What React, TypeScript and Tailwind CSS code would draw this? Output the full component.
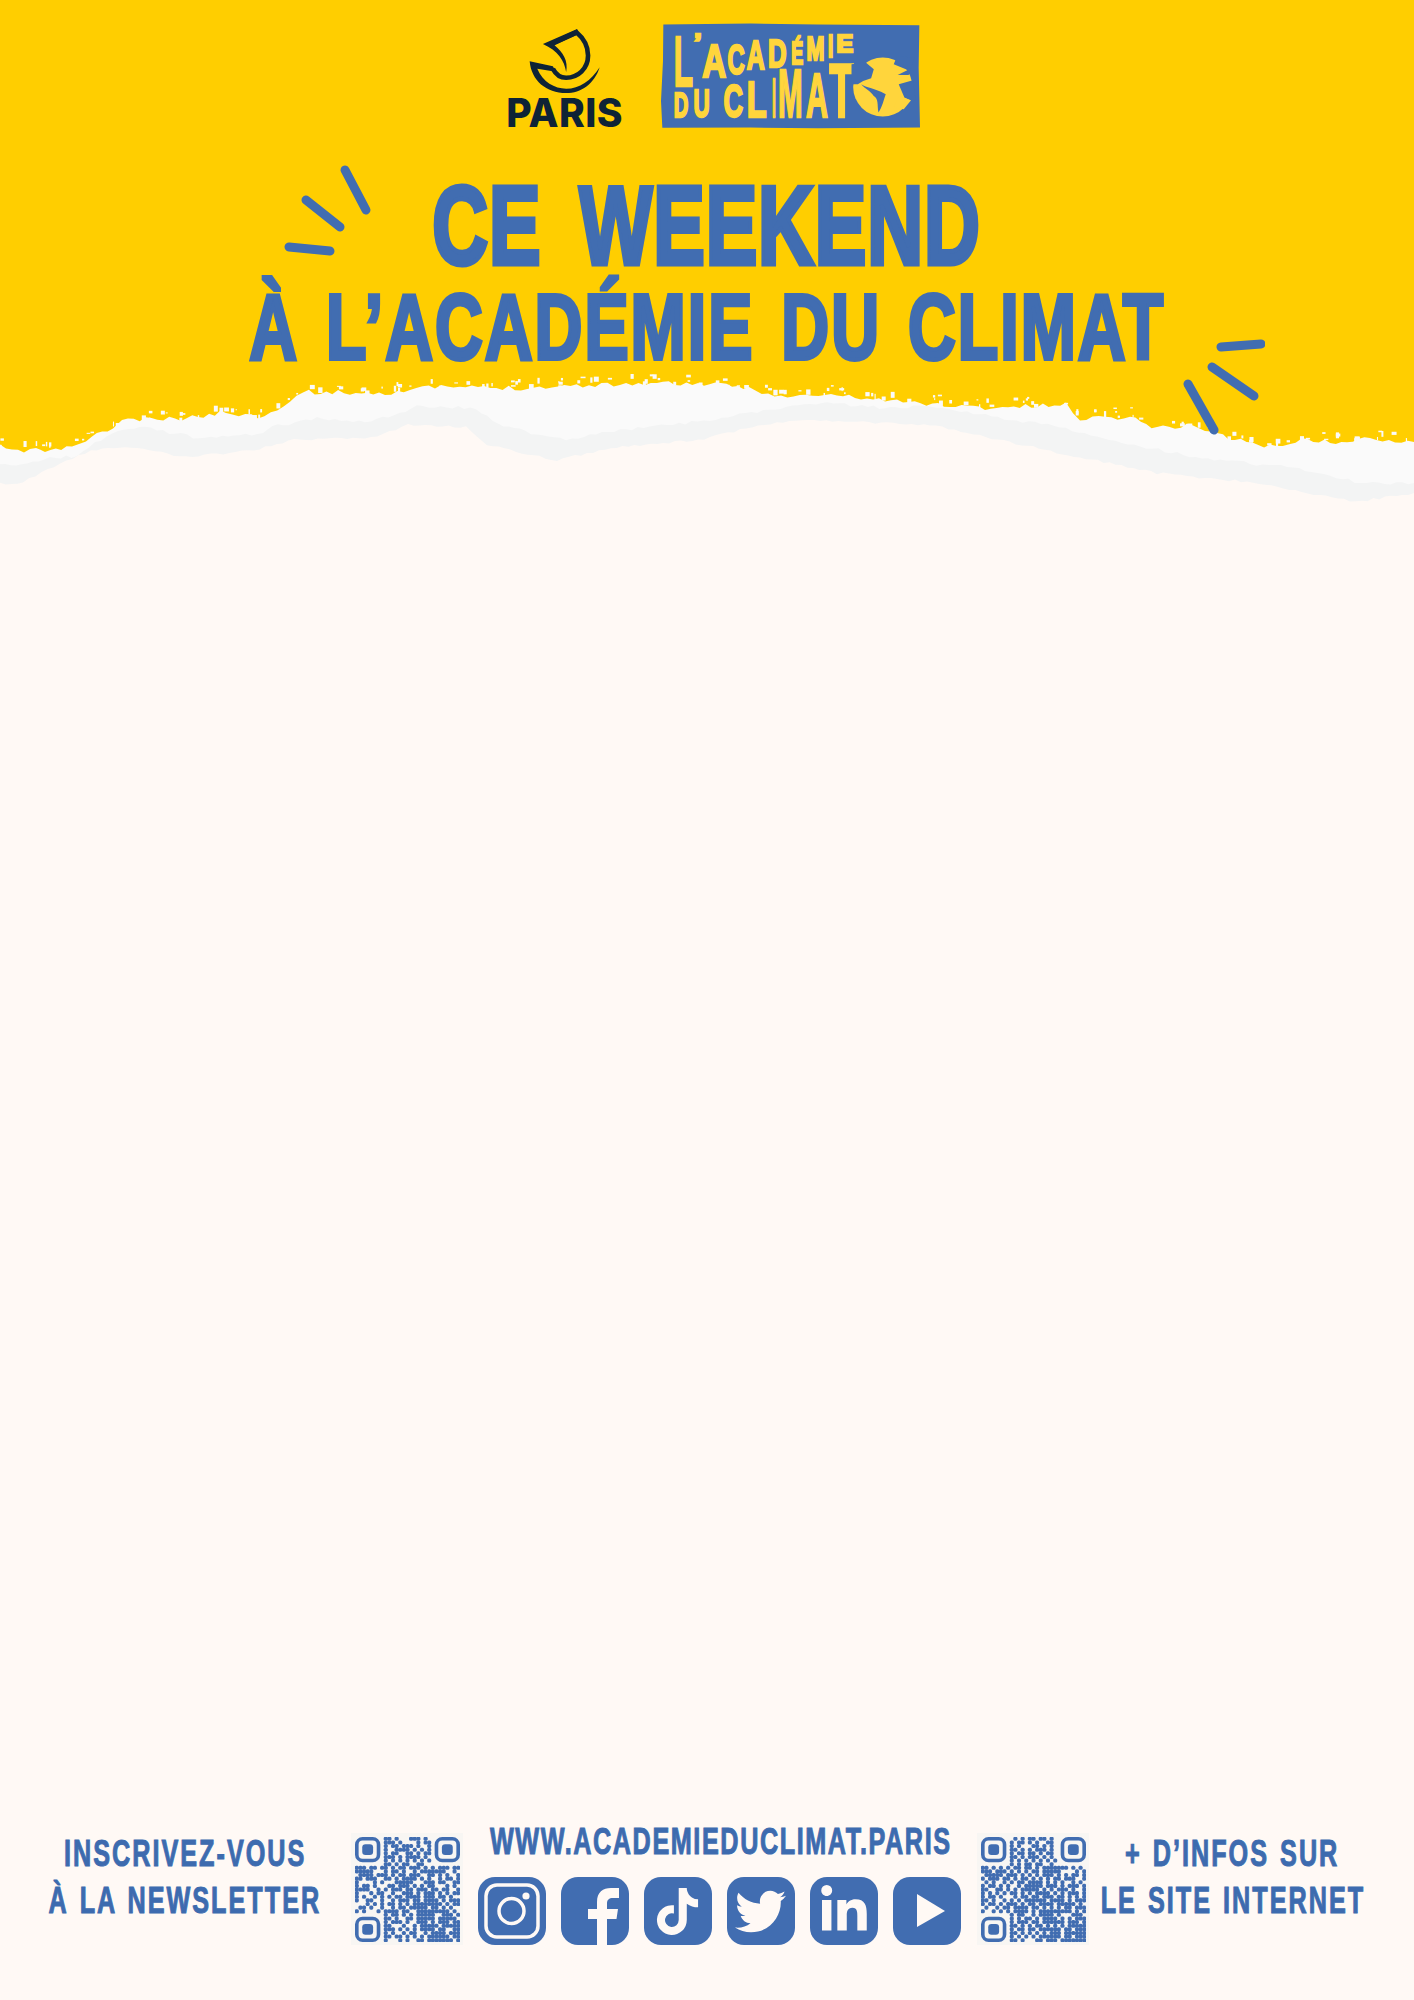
import { FaLinkedinIn, FaTiktok, FaTwitter } from "react-icons/fa";

type Pt = [number, number];

const yellowEdge: Pt[] = [
  [0, 447], [18, 452], [36, 448], [45, 452], [72, 447], [86, 440], [113, 428], [122, 420], [181, 419], [226, 412],
  [258, 417], [290, 402], [303, 392], [385, 393], [435, 387], [521, 388], [589, 385], [657, 383], [704, 384], [749, 388],
  [781, 397], [831, 395], [903, 402], [985, 408], [1066, 405], [1080, 418], [1130, 417], [1157, 428], [1193, 425],
  [1229, 438], [1270, 447], [1302, 440], [1347, 443], [1370, 438], [1414, 442],
];
const grayEdge: Pt[] = [
  [0, 466], [27, 465], [50, 457], [77, 457], [95, 443], [118, 430], [145, 428], [199, 438], [263, 433], [272, 427],
  [317, 418], [371, 422], [417, 407], [476, 408], [498, 423], [525, 432], [566, 440], [620, 430], [679, 423], [704, 422],
  [763, 410], [822, 402], [885, 408], [930, 405], [998, 418], [1066, 428], [1134, 445], [1202, 458], [1293, 468],
  [1361, 483], [1414, 483],
];
const creamEdge: Pt[] = [
  [0, 484], [23, 482], [54, 467], [91, 450], [131, 447], [186, 457], [254, 450], [294, 440], [371, 438], [408, 425],
  [466, 427], [487, 445], [557, 460], [611, 448], [704, 439], [758, 425], [808, 420], [930, 425], [998, 440],
  [1080, 457], [1157, 473], [1247, 482], [1356, 502], [1414, 493],
];

// small seeded random so the torn edge stays the same on each load
function seeded(seed: number) {
  let s = seed;
  return () => {
    s = (s * 16807) % 2147483647;
    return s / 2147483647;
  };
}

function tornPath(edge: Pt[], seed: number, amount: number) {
  const rnd = seeded(seed);
  const out: string[] = [];
  for (let i = 0; i < edge.length - 1; i++) {
    const [x0, y0] = edge[i];
    const [x1, y1] = edge[i + 1];
    const steps = Math.max(1, Math.round((x1 - x0) / 6));
    for (let k = 0; k < steps; k++) {
      const t = k / steps;
      const y = y0 + (y1 - y0) * t + (rnd() - 0.5) * amount;
      out.push(`${(x0 + (x1 - x0) * t).toFixed(1)} ${y.toFixed(1)}`);
    }
  }
  out.push(`1414 ${edge[edge.length - 1][1]}`);
  return `M0 520 L${out.join(" L")} L1414 520 Z`;
}

function specks() {
  const rnd = seeded(77);
  const list: { x: number; y: number; w: number; h: number }[] = [];
  for (let i = 0; i < yellowEdge.length - 1; i++) {
    const [x0, y0] = yellowEdge[i];
    const [x1, y1] = yellowEdge[i + 1];
    const n = Math.round((x1 - x0) / 9);
    for (let k = 0; k < n; k++) {
      const t = rnd();
      list.push({
        x: x0 + (x1 - x0) * t,
        y: y0 + (y1 - y0) * t - 1 - rnd() * 9,
        w: 1 + rnd() * 4,
        h: 1 + rnd() * 5,
      });
    }
  }
  return list;
}

function TornEdge() {
  return (
    <svg viewBox="0 370 1414 140" className="block h-[140px] w-full shrink-0">
      <rect x="0" y="370" width="1414" height="140" fill="#FFCE00" />
      <path d={tornPath(yellowEdge, 11, 5)} fill="#FAFAFA" />
      {specks().map((s, i) => (
        <rect key={i} x={s.x} y={s.y} width={s.w} height={s.h} fill="#FAFAFA" />
      ))}
      <path d={tornPath(grayEdge, 23, 3.5)} fill="#F3F4F4" />
      <path d={tornPath(creamEdge, 37, 2.5)} fill="#FFF9F5" />
    </svg>
  );
}

function ParisLogo() {
  return (
    <div className="flex w-[113px] flex-col items-center">
      <svg viewBox="230 80 220 200" className="h-[67px] w-[73px]" fill="#0E2336">
        <path d="M300 130 L376 95 C400 115 411 140 411 165 C411 205 380 232 345 232 C325 232 312 218 305 205" fill="none" stroke="#0E2336" strokeWidth="14" />
        <path d="M275 130 L378 85 L384 100 L310 134 C335 155 352 180 345 215 C340 180 320 150 275 130 Z" />
        <path d="M235 182 L305 197 L314 214 L258 205 C275 245 310 265 345 265 C385 265 420 240 446 200 C430 250 390 278 345 278 C285 278 240 240 235 182 Z" />
      </svg>
      <span className="mt-[4px] text-[39px] leading-[30px] font-extrabold tracking-[0.01em] text-[#0E2336] font-['Inter',sans-serif]">PARIS</span>
    </div>
  );
}

const logoLetters: [string, number, number, number, number][] = [
  ["L", 668, 726, 102, 256],
  ["’", 730, 752, 100, 150],
  ["A", 754, 826, 128, 228],
  ["C", 830, 882, 127, 218],
  ["A", 888, 942, 114, 203],
  ["D", 952, 1008, 114, 198],
  ["É", 1022, 1058, 122, 188],
  ["M", 1068, 1122, 108, 178],
  ["I", 1132, 1148, 102, 168],
  ["E", 1158, 1208, 102, 153],
  ["D", 668, 712, 272, 348],
  ["U", 728, 777, 264, 348],
  ["C", 818, 877, 248, 348],
  ["L", 888, 948, 238, 348],
  ["I", 964, 976, 226, 348],
  ["M", 982, 1056, 198, 348],
  ["A", 1066, 1132, 212, 348],
  ["T", 1136, 1210, 184, 348],
];

function AcademieLogo() {
  return (
    <svg viewBox="630 66 782 318" className="h-[106px] w-[260px]">
      <path d="M637 70 L900 67 L1100 70 L1407 72 L1405 200 L1409 380 L1100 382 L900 380 L634 381 L630 300 L636 180 Z" fill="#416DB1" />
      <g fill="#FFD53C" stroke="#FFD53C" strokeWidth="7" fontFamily="'Liberation Sans',sans-serif" fontWeight="700">
        {logoLetters.map(([ch, x0, x1, y0, y1], i) => (
          <text key={i} x={x0} y={y1} fontSize={(y1 - y0) / 0.72} textLength={x1 - x0} lengthAdjust="spacingAndGlyphs">
            {ch}
          </text>
        ))}
      </g>
      <circle cx="1297" cy="258" r="89" fill="#FFD53C" />
      <path d="M1203 190 L1245 184 L1270 205 L1262 232 L1238 240 L1222 250 L1203 250 Z" fill="#416DB1" />
      <path d="M1232 250 C1250 262 1265 258 1306 280 C1300 295 1296 318 1284 335 C1280 310 1285 295 1270 285 C1260 270 1245 265 1232 250 Z" fill="#416DB1" />
      <path d="M1330 190 L1372 207 L1342 222 L1375 222 L1392 170 L1340 165 Z" fill="#416DB1" />
      <path d="M1345 250 L1388 238 L1396 300 L1380 298 L1362 290 Z" fill="#416DB1" />
      <path d="M1345 285 L1382 298 L1360 325 L1330 320 Z" fill="#FFD53C" />
    </svg>
  );
}

function Marks({ lines, className }: { lines: number[][]; className: string }) {
  return (
    <svg viewBox="0 0 100 100" className={className} fill="none" stroke="#416DB1" strokeWidth="9" strokeLinecap="round">
      {lines.map((l, i) => (
        <line key={i} x1={l[0]} y1={l[1]} x2={l[2]} y2={l[3]} />
      ))}
    </svg>
  );
}

const qrLeft = [
  "1111111.11.1...111.1.1.1111111",
  "1111111.111.1....1.11..1111111",
  "1111111.1.11.111.1..1..1111111",
  "1111111.1..1111.1.1.1..1111111",
  "1111111.1.11..11.1.11..1111111",
  "1111111.111.1.1111.1...1111111",
  "1111111.1.1.1.1.1.1.1..1111111",
  "........11.1.11..11.....",
  "111.11.11.1.11.111.1.1.111.11",
  "11111...1.11.1..1.1111111..1.",
  ".1111.111.1.11.111..11.1.1..1",
  "11.111..11.1.1111.1.1..1.11.1",
  "1....1.1...11111...111.11..11",
  "1.11.1...11.111.1.1.11...1.1.",
  "1111..1.1.111.11.111.11.11..1",
  "1...1.11..1..111.1.111.1.1.11",
  "1.1..1.1.1.11.1111.111.11.1..",
  "1..11..1..1.111.11.1111.1.111",
  "...1.1.1.11.1.1.11111111.1.11",
  ".11.1..1..1.11.11111.11.1.1..",
  "1.1...1.1111.11..111111111.1.",
  "........1.11.1.1.11111..111.1",
  "1111111.11.1..11.11111.11111.",
  "1111111.1.111.1..111.1.111.11",
  "1111111.11...1..1.11111.11111",
  "1111111.111.1.1.1.1111.11..11",
  "1111111.1.1..1.11..1.1111.111",
  "1111111.11.11.1.1.1.111111.11",
  "1111111.1...1.1..11.1111111.1",
];
const qrRight = [
  "1111111..1.1.11.11.1...1111111",
  "1111111.1.11.1.1..11...1111111",
  "1111111.1.1...11.1.1...1111111",
  "1111111.11.1.1.111.1...1111111",
  "1111111.1.11.11.1.11...1111111",
  "1111111.11.1.111.1.1...1111111",
  "1111111.1.1.1.1.1.1.1..1111111",
  "........1.1.11.11..1....",
  "11.1.1.1.11.11.1.1111111.1.1.",
  "111.111.1.1.1.11.11111....1.1",
  ".11111.111.1.1.1.111.1.1.11.1",
  "1.111.11.1.11.1.1.1.11.111..1",
  ".1.1..1.1.11.1111.1.1.1..1.1.",
  "1.11.1.1..1.11111.111.1.111.1",
  "11..11.1.1.11111.1.1.111.1..1",
  "1.1.1.1.11.1.1.1111.1.1.111.1",
  "1.11.1...1.11.11.111.11.1.1.1",
  "11.1..1.1.1.111111.1111.1.111",
  "1.11.1.111.1.11.1111.11111.1.",
  ".1..1.11.1111.11.1.1.1.11.111",
  "1..1.1.1.1111.1.111111111.1.1",
  "........1.11..1.1111.1...111.",
  "1111111.1.1.11.1.1111.1.1.111",
  "1111111.1.111.11.111111.111.1",
  "1111111.11.1.1.11.1.1.1.11111",
  "1111111.1.11.11.111111.11.111",
  "1111111.11.1.1.1.1.111.111111",
  "1111111.1.1.1.1.111111.11.111",
  "1111111.11.1...11.111.1111111",
];

function Finder({ x, y }: { x: number; y: number }) {
  return (
    <g>
      <rect x={x + 0.5} y={y + 0.5} width="6" height="6" rx="1.6" fill="none" stroke="#416DB1" />
      <rect x={x + 2} y={y + 2} width="3" height="3" rx="0.9" fill="#416DB1" />
    </g>
  );
}

function Qr({ rows }: { rows: string[] }) {
  const inFinder = (c: number, r: number) => (r < 8 && (c < 8 || c > 20)) || (r > 20 && c < 8);
  return (
    <div className="flex h-[112px] w-[112px] shrink-0 items-center justify-center bg-[#F8F6F3]">
      <svg viewBox="0 0 29 29" className="h-[105px] w-[105px]">
        {rows.map((row, r) =>
          row
            .slice(0, 29)
            .split("")
            .map((v, c) =>
              v === "1" && !inFinder(c, r) ? (
                <rect key={`${r}-${c}`} x={c - 0.06} y={r - 0.06} width="1.12" height="1.12" rx="0.42" fill="#416DB1" />
              ) : null,
            ),
        )}
        <Finder x={0} y={0} />
        <Finder x={22} y={0} />
        <Finder x={0} y={22} />
      </svg>
    </div>
  );
}

function Social({ children }: { children: React.ReactNode }) {
  return (
    <div className="flex h-[68px] w-[68px] items-center justify-center overflow-hidden rounded-[17px] bg-[#416DB1] text-[#FFF9F5]">
      {children}
    </div>
  );
}

function SocialRow() {
  return (
    <div className="flex gap-[15px]">
      <Social>
        <svg viewBox="0 0 68 68" className="h-[68px] w-[68px]" fill="none" stroke="#FFF9F5">
          <rect x="8" y="8" width="52" height="52" rx="11" strokeWidth="3.5" />
          <circle cx="33.5" cy="34" r="12.5" strokeWidth="3.5" />
          <circle cx="48" cy="19" r="3.6" fill="#FFF9F5" stroke="none" />
        </svg>
      </Social>
      <Social>
        <svg viewBox="0 0 68 68" className="h-[68px] w-[68px]" fill="#FFF9F5">
          <path d="M36 68 V42 H27 V32 H36 V25 C36 15 42 11 50 11 H58 V21 H52 C48 21 46 23 46 26 V32 H57 L55.5 42 H46 V68 Z" />
        </svg>
      </Social>
      <Social>
        <FaTiktok size={47} />
      </Social>
      <Social>
        <FaTwitter size={51} />
      </Social>
      <Social>
        <FaLinkedinIn size={52} />
      </Social>
      <Social>
        <svg viewBox="0 0 68 68" className="h-[68px] w-[68px]" fill="#FFF9F5">
          <path d="M24 17 L52 34 L24 50 Z" />
        </svg>
      </Social>
    </div>
  );
}

function FooterLabel({ top, bottom, width }: { top: string; bottom: string; width: string }) {
  return (
    <div className={`${width} flex shrink-0 flex-col items-center text-[36px] leading-[47px] font-bold tracking-[0.08em] [word-spacing:0.08em] whitespace-nowrap text-[#3D6BAF] [-webkit-text-stroke:1px_#3D6BAF] font-['Liberation_Sans',sans-serif]`}>
      <div className="scale-x-[0.7]">{top}</div>
      <div className="scale-x-[0.7]">{bottom}</div>
    </div>
  );
}

export default function App() {
  return (
    <div className="relative flex h-[2000px] flex-col overflow-hidden bg-[#FFF9F5]">
      <header className="h-[370px] shrink-0 bg-[#FFCE00] pt-[23px]">
        <div className="flex items-start justify-center gap-[40px] pl-[15px]">
          <div className="pt-[4px]">
            <ParisLogo />
          </div>
          <AcademieLogo />
        </div>
        <h1 className="mt-[47px] flex flex-col items-center font-bold whitespace-nowrap text-[#416DB1] font-['Liberation_Sans',sans-serif]">
          <span className="scale-x-[0.69] text-[112px] leading-[100px] tracking-[0.012em] [word-spacing:0.2em] [-webkit-text-stroke:5px_#416DB1]">CE WEEKEND</span>
          <span className="scale-x-[0.72] text-[92px] leading-[102px] tracking-[0.03em] [word-spacing:0.1em] [-webkit-text-stroke:4px_#416DB1]">À L’ACADÉMIE DU CLIMAT</span>
        </h1>
      </header>
      <TornEdge />

      <Marks
        className="absolute top-[160px] left-[280px] h-[100px] w-[100px]"
        lines={[[65, 10, 86, 50], [26, 40, 60, 67], [9, 87, 50, 91]]}
      />
      <Marks
        className="absolute top-[335px] left-[1165px] h-[100px] w-[100px]"
        lines={[[56, 12, 96, 9], [47, 32, 89, 61], [23, 49, 49, 95]]}
      />

      <footer className="mt-auto flex items-start pb-[55px] pl-[50px]">
        <div className="-mt-[3px]">
          <FooterLabel width="w-[270px]" top="INSCRIVEZ-VOUS" bottom="À LA NEWSLETTER" />
        </div>
        <div className="ml-[31px]">
          <Qr rows={qrLeft} />
        </div>
        <div className="ml-[14px] flex w-[484px] shrink-0 flex-col items-center">
          <div className="-mt-[11px] mb-[16px] translate-x-[2px] scale-x-[0.7] text-[36px] leading-[39px] font-bold tracking-[0.063em] whitespace-nowrap text-[#3D6BAF] [-webkit-text-stroke:1px_#3D6BAF] font-['Liberation_Sans',sans-serif]">
            WWW.ACADEMIEDUCLIMAT.PARIS
          </div>
          <SocialRow />
        </div>
        <div className="ml-[16px]">
          <Qr rows={qrRight} />
        </div>
        <div className="ml-[12px] -mt-[3px]">
          <FooterLabel width="w-[263px]" top="+ D’INFOS SUR" bottom="LE SITE INTERNET" />
        </div>
      </footer>
    </div>
  );
}
